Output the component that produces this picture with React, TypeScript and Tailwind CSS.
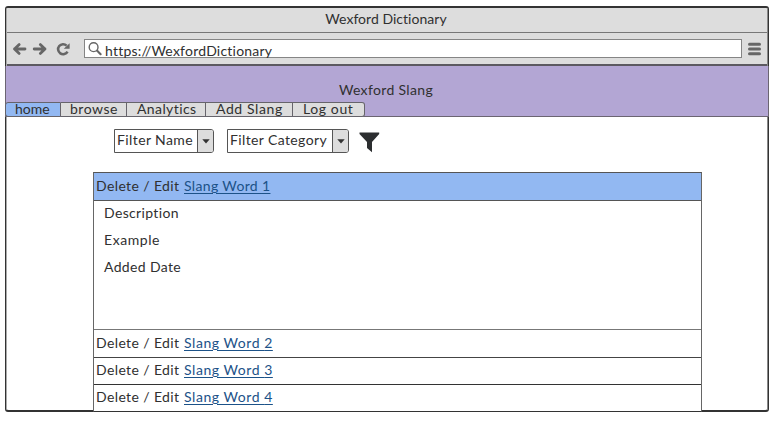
import type { ReactNode } from "react";

const tabs = [
  { label: "home", box: "w-[56px] bg-[#92b8f2] rounded-l-[3px] pl-[9px]", text: "tracking-[0px]" },
  { label: "browse", box: "w-[66px] bg-[#dddddd] pl-[9px]", text: "tracking-[0.5px]" },
  { label: "Analytics", box: "w-[79px] bg-[#dddddd] pl-[10px]", text: "tracking-[0.4px]" },
  { label: "Add Slang", box: "w-[87px] bg-[#dddddd] pl-[10px]", text: "tracking-[0.6px]" },
  { label: "Log out", box: "w-[72px] bg-[#dddddd] rounded-r-[3px] pl-[10px]", text: "tracking-[0.6px]" },
];

function Select({ children, box }: { children: ReactNode; box: string }) {
  return (
    <div className={`flex h-[24px] overflow-hidden rounded-r-[3px] border border-[#555555] bg-white ${box}`}>
      <span className="flex-1 pl-[2px] leading-[20px]">{children}</span>
      <span className="flex w-[16px] items-center justify-center border-l border-[#555555] bg-[#dddddd]">
        <svg width="8" height="5" viewBox="0 0 8 5">
          <path d="M0.3 0.3H7.7L4 4.5Z" fill="#333" />
        </svg>
      </span>
    </div>
  );
}

function Row({ n, box, link }: { n: number; box: string; link: string }) {
  return (
    <div className={`flex pl-[2px] ${box}`}>
      <span className="w-[88px] tracking-[0.38px]">Delete / Edit</span>
      <a className={`text-[#1c5288] underline decoration-1 underline-offset-2 ${link}`}>Slang Word {n}</a>
    </div>
  );
}

export default function App() {
  return (
    <div className="h-[427px] w-[778px] overflow-hidden whitespace-pre bg-white pl-[5px] pt-[6px] font-['Lato','Liberation_Sans',sans-serif] text-[14px] text-[#303030]">
      <div className="flex h-[406px] w-[764px] flex-col rounded-[3px] border-x border-y-2 border-[#333333] px-px shadow-[inset_1px_0_0_#aaaaaa,inset_-1px_0_0_#888888]">
        <header className="h-[25px] shrink-0 rounded-t-[2px] border-b border-[#777777] bg-[#dddddd] pr-[2px] text-center leading-[22px] tracking-[0.03px]">
          Wexford Dictionary
        </header>
        <div className="flex h-[33px] shrink-0 items-center border-b-2 border-[#5c5961] bg-[#dddddd] pl-[5px]">
          <svg width="58" height="16" viewBox="0 0 58 16" fill="none" stroke="#666" strokeWidth="2.8" strokeLinecap="round" strokeLinejoin="round">
            <path d="M13 8H2.5M7.2 3.6L2.5 8L7.2 12.4" />
            <path d="M22.2 8H33M28.3 3.6L33 8L28.3 12.4" />
            <path d="M55.5 10.6A5 5 0 1 1 54.6 4.6" strokeWidth="2.6" strokeLinecap="butt" />
            <path d="M57.6 2.3V7.8H51.8Z" fill="#666" stroke="none" />
          </svg>
          <div className="ml-[14px] flex h-[19px] w-[658px] items-center border border-[#858585] bg-white pl-[3px]">
            <svg width="14" height="14" viewBox="0 0 14 14" fill="none" stroke="#666" strokeLinecap="round">
              <circle cx="5.6" cy="5.2" r="4.4" strokeWidth="1.4" />
              <path d="M9.2 8.8L12.6 12.2" strokeWidth="2.1" />
            </svg>
            <span className="ml-[3px] pt-[4px] leading-[17px] tracking-[0.22px]">https://WexfordDictionary</span>
          </div>
          <svg className="ml-[6px]" width="13" height="14" viewBox="0 0 13 14" stroke="#666" strokeWidth="3" strokeLinecap="round">
            <path d="M1.5 2.2H11.5M1.5 7H11.5M1.5 11.8H11.5" />
          </svg>
        </div>
        <section className="-mx-[2px] flex h-[51px] shrink-0 flex-col justify-end border-x border-b border-[#6b6571] bg-[#b3a6d4]">
          <div className="h-[20px] pr-[2px] text-center leading-[15px] tracking-[0.35px]">Wexford Slang</div>
          <nav className="-mb-px -ml-px flex h-[15px]">
            {tabs.map((tab, i) => (
              <div key={tab.label} className={`h-[15px] border-y border-r border-[#66646b] leading-[11px] ${i === 0 ? "border-l" : ""} ${tab.box}`}>
                <span className={tab.text}>{tab.label}</span>
              </div>
            ))}
          </nav>
        </section>
        <div className="flex pl-[107px] pt-[12px]">
          <Select box="w-[100px] tracking-[0.4px]">Filter Name</Select>
          <Select box="ml-[13px] w-[122px] tracking-[0.38px]">Filter Category</Select>
          <svg className="ml-[10px] mt-[3px]" width="21" height="21" viewBox="0 0 21 21" fill="#2c2e30">
            <path d="M0.5 0.5H20.2V2L13 10V20.2L8 16V10L0.5 2Z" />
          </svg>
        </div>
        <main className="-mb-[2px] ml-[86px] mt-[19px] flex h-[240px] w-[609px] shrink-0 flex-col border border-x-[#666666] border-t-[#555555] border-b-[#333333] bg-white">
          <Row n={1} link="tracking-[0.35px]" box="h-[28px] border-b border-[#555555] bg-[#92b8f2] leading-[26px]" />
          <div className="-mt-px h-[129px] pl-[10px] leading-[27px] tracking-[0.35px]">
            <div className="-mt-px">Description</div>
            <div className="tracking-[0.55px]">Example</div>
            <div>Added Date</div>
          </div>
          <Row n={2} link="tracking-[0.55px]" box="h-[28px] border-t border-[#777777] leading-[26px]" />
          <Row n={3} link="tracking-[0.55px]" box="h-[27px] border-t border-[#444444] leading-[24px]" />
          <Row n={4} link="tracking-[0.55px]" box="h-[27px] border-t border-[#333333] leading-[24px]" />
        </main>
      </div>
    </div>
  );
}
